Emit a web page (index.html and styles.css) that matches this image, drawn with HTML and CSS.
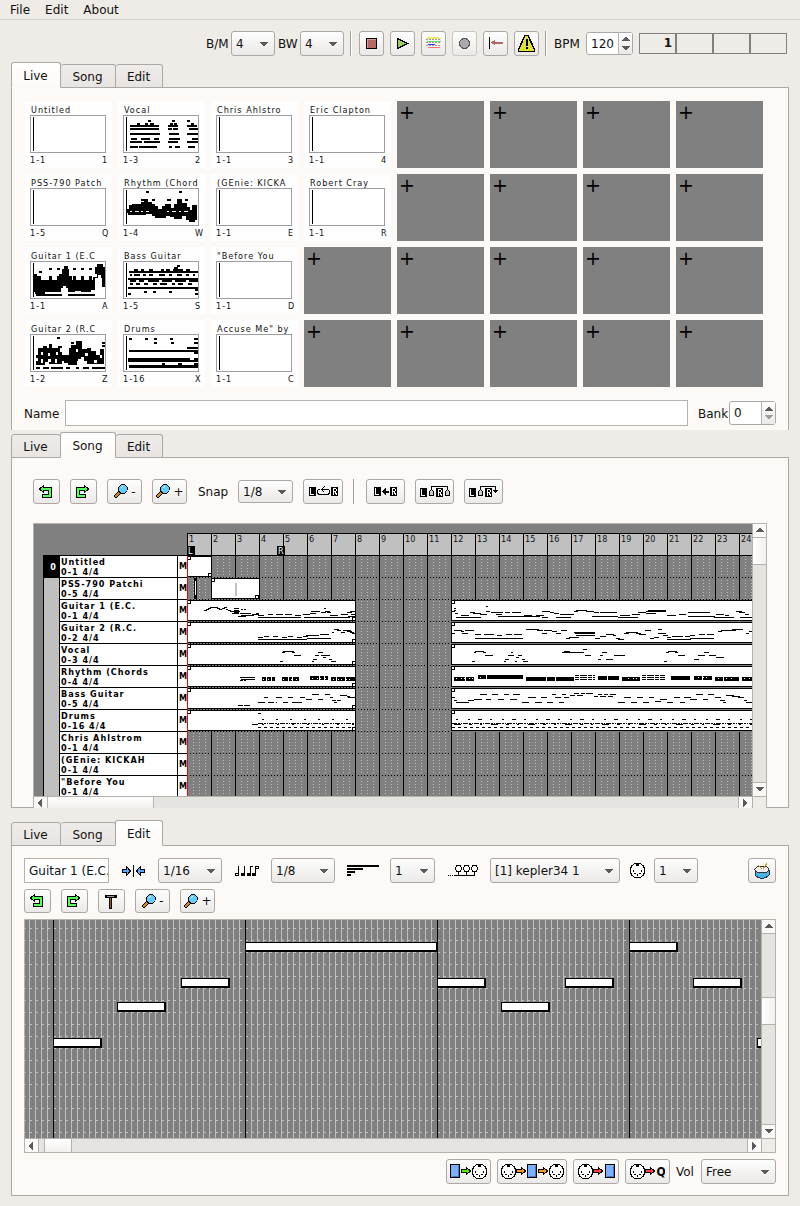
FILE: index.html
```html
<!DOCTYPE html>
<html lang="en">
<head>
<meta charset="utf-8">
<title>Sequencer</title>
<link rel="stylesheet" href="styles.css">
</head>
<body>
<svg class="defs" width="0" height="0">
  <symbol id="undo" viewBox="0 0 14 14"><path d="M4.500 .5v2h8v10h-9v-3h6v-4h-5v2L.5 4z" fill="#5f5" stroke="#000"/></symbol>
  <symbol id="redo" viewBox="0 0 14 14"><path d="M8.500 .5v2h-8v10h9v-3h-6v-4h5v2l4-3.500z" fill="#5f5" stroke="#000"/></symbol>
  <symbol id="lens" viewBox="0 0 16 15"><path d="M1.500 13.500L7 8" stroke="#000" stroke-width="4"/><path d="M2 13l4-4" stroke="#d08a20" stroke-width="2"/><circle cx="10" cy="5" r="4.300" fill="#6cf" stroke="#000"/><path d="M8 4l2-2" stroke="#dff"/></symbol>
  <symbol id="din" viewBox="0 0 15 15"><path d="M5 .5h5l3 2 1.500 3v4l-1.500 3-3 2H5l-3-2-1.500-3v-4L2 2.500z" fill="#fff" stroke="#000"/><path d="M3 7h1v2H3zM11 7h1v2h-1zM4 10h2v1H4zM9 10h2v1H9zM7 11h1v2H7zM6 1h3v2H6z"/></symbol>
  <symbol id="block" viewBox="0 0 10 14"><path d="M.5 .5h9v13h-9z" fill="#7db0ff" stroke="#000"/><path d="M2 12.500h6.500V2" fill="none" stroke="#47c"/></symbol>
  <symbol id="arrow" viewBox="0 0 10 8"><path d="M.5 2.500h5v-2l4 3.500-4 3.500v-2h-5z" stroke="#000"/></symbol>
  <symbol id="markL" viewBox="0 0 7 9"><path d="M0 0h7v9H0z"/><path d="M1.500 1v6.500H5" fill="none" stroke="#fff"/></symbol>
  <symbol id="markR" viewBox="0 0 7 9"><path d="M0 0h7v9H0z"/><path d="M2.500 8V1.500h2l1 1v1l-1 1h-2M4.500 5v1l1 1v1" fill="none" stroke="#fff"/></symbol>
  <symbol id="bell" viewBox="0 0 5 7"><path d="M.5 6.500v-4l2-2 2 2v4z" fill="#ccc" stroke="#000"/></symbol>
  <symbol id="down" viewBox="0 0 8 4"><path d="M0 0h8L4.500 4h-1z" fill="#5a5a5a"/></symbol>
  <symbol id="up" viewBox="0 0 8 4"><path d="M0 4h8L4.500 0h-1z" fill="#5a5a5a"/></symbol>
  <symbol id="left" viewBox="0 0 4 8"><path d="M4 0v8L0 4.500v-1z" fill="#5a5a5a"/></symbol>
  <symbol id="right" viewBox="0 0 4 8"><path d="M0 0v8l4-3.500v-1z" fill="#5a5a5a"/></symbol>
</svg>

<nav class="menu"><span>File</span><span>Edit</span><span>About</span></nav>
<header class="transport">
  <span>B/M</span><div class="select s44">4<svg><use href="#down"/></svg></div>
  <span class="bw">BW</span><div class="select s44">4<svg><use href="#down"/></svg></div>
  <i class="sep"></i>
  <div class="tools">
    <button><svg width="15" height="15"><path d="M2.500 2.500h10v10h-10z" fill="#b56868" stroke="#000"/><path d="M3.500 12V3.500H12" fill="none" stroke="#d99"/></svg></button>
    <button><svg width="15" height="15"><path d="M2.500 2.500v10l10-5z" fill="#9c6" stroke="#000"/></svg></button>
    <button><svg width="15" height="15"><path d="M1 1.500h12M1 2.500h14" stroke="#ece66a"/><path d="M1 5.500h14" stroke="#6d6"/><path d="M2 8.500h7" stroke="#33f"/><path d="M2 11.500h12" stroke="#f77"/><path d="M0 3.500h15M0 6.500h15M0 9.500h15" stroke="#999" stroke-dasharray="2 1"/></svg></button>
    <button class="off"><svg width="15" height="15"><circle cx="7.500" cy="7.500" r="5" fill="#aaa" stroke="#555"/></svg></button>
    <button><svg width="15" height="15"><path d="M1.500 1v12" stroke="#000"/><path d="M5 6.500h10" stroke="#b56868" stroke-width="2"/><path d="M3 6.500l4-3v6z" fill="#b56868"/></svg></button>
    <button><svg width="19" height="19"><path d="M8 1.500h3l6.500 14v2h-16v-2z" fill="#dfe43a" stroke="#000" stroke-width="1.500"/><path d="M9.500 5v7M9.500 13v2" stroke="#000" stroke-width="2"/></svg></button>
  </div>
  <i class="sep"></i>
  <span class="bpm">BPM</span>
  <div class="spin tempo"><b>120</b><div><svg><use href="#up"/></svg><svg><use href="#down"/></svg></div></div>
  <div class="beats"><i>1</i><i></i><i></i><i></i></div>
</header>

<div class="tabs"><span class="on">Live</span><span>Song</span><span>Edit</span></div>
<main class="panel live">
  <div class="pads">
    <div class="pad"><h4>Untitled</h4><svg class="thumb"></svg><p><span>1-1</span><b>1</b></p></div>
    <div class="pad"><h4>Vocal</h4><svg class="thumb"><path class="n" d="M24 5h3M13 8h3M21 8h3M26 8h4M6 10h29M6 13h29M6 18h30M7 23h6M17 23h9M30 23h5M6 26h12M20 26h16M6 31h8M15 31h18M48 5h3M46 8h3M50 8h3M44 10h10M44 13h4M49 13h5M45 18h10M45 23h11M44 26h10M45 31h3M51 31h5M63 5h3M67 8h3M63 10h10M65 13h9M63 18h11M68 23h6M63 26h11M64 31h7"/></svg><p><span>1-3</span><b>2</b></p></div>
    <div class="pad"><h4>Chris Ahlstro</h4><svg class="thumb"></svg><p><span>1-1</span><b>3</b></p></div>
    <div class="pad"><h4>Eric Clapton</h4><svg class="thumb"></svg><p><span>1-1</span><b>4</b></p></div>
    <div class="free">+</div><div class="free">+</div><div class="free">+</div><div class="free">+</div>

    <div class="pad"><h4>PSS-790 Patch</h4><svg class="thumb"></svg><p><span>1-5</span><b>Q</b></p></div>
    <div class="pad"><h4>Rhythm (Chord</h4><svg class="thumb"><path d="M3 20H5V16H8V15H17V13H20V10H24V13H28V15H31V17H34V20H38V17H41V15H47V19H50V15H53V10H58V14H63V18H66V21H68V16H73V31H71V33H65V31H62V27H58V30H50V28H46V27H42V29H31V27H28V25H22V26H4V24H3z"/><path class="n" d="M22 3h3M55 3h3M17 11h3M28 11h3M43 11h4M61 11h3"/><path d="M6 22.500h19M43 22.500h10M55 22.500h9" stroke="#fff" stroke-dasharray="2 3 4 2"/></svg><p><span>1-4</span><b>W</b></p></div>
    <div class="pad"><h4>(GEnie: KICKA</h4><svg class="thumb"></svg><p><span>1-1</span><b>E</b></p></div>
    <div class="pad"><h4>Robert Cray</h4><svg class="thumb"></svg><p><span>1-1</span><b>R</b></p></div>
    <div class="free">+</div><div class="free">+</div><div class="free">+</div><div class="free">+</div>

    <div class="pad"><h4>Guitar 1 (E.C</h4><svg class="thumb"><path d="M3 12H6V14H10V18H28V12H31V7H33V4H37V7H38V14H41V18H62V15H66V12H64V5H66V2H72V5H74V25H71V16H70V13H67V16H64V28H60V30H50V29H44V30H37V26H35V24H32V26H30V30H14V32H4V30H3z"/><path class="n" d="M8 10h3M18 7h3M26 7h3M42 7h3M50 7h3M58 7h3M18 15h3M26 15h3M42 15h3M50 15h3M58 15h3M18 17h3M26 17h3M42 17h3M50 17h3M58 17h3M5 33h26M37 33h27"/></svg><p><span>1-1</span><b>A</b></p></div>
    <div class="pad"><h4>Bass Guitar</h4><svg class="thumb"><path class="n" d="M5 10h69M10 8h4M17 8h3M25 8h4M37 8h3M42 8h4M49 8h10M50 6h4M53 4h3M62 8h4M6 13h2M10 13h6M19 13h3M25 13h4M35 13h6M45 13h3M53 13h5M62 13h3M69 13h2M4 17h70M6 19h6M15 19h5M24 19h11M38 19h10M51 19h11M65 19h9M6 22h3M12 22h4M20 22h4M29 22h4M36 22h7M48 22h3M54 22h5M64 22h4M4 26h70M71 28h3M20 30h3M29 30h3M45 30h3M4 32h3M71 32h3"/></svg><p><span>1-5</span><b>S</b></p></div>
    <div class="pad"><h4>"Before You</h4><svg class="thumb"></svg><p><span>1-1</span><b>D</b></p></div>
    <div class="free">+</div><div class="free">+</div><div class="free">+</div><div class="free">+</div><div class="free">+</div>

    <div class="pad"><h4>Guitar 2 (R.C</h4><svg class="thumb"><path d="M5 20H7V13H12V11H16V13H18V9H21V13H29V17H31V20H38V13H40V10H45V6H51V14H56V13H60V16H65V20H69V14H73V29H56V26H53V22H50V24H47V26H46V30H37V28H33V26H31V29H18V27H14V30H5V26H7V23H5z"/><path class="n" d="M26 3h3M71 8h3M71 11h3M40 8h3M27 12h4M5 33h4M12 33h6M20 33h12M35 33h4M45 33h3M52 33h6M61 33h13"/><path d="M10 17h2v3h-2zM17 18h2v3h-2zM25 17h2v3h-2zM10 24h2v4h-2zM17 24h3v3h-3zM24 24h2v4h-2zM45 14h2v3h-2zM54 18h3v3h-3zM63 25h3v3h-3zM69 20h2v3h-2z" fill="#fff"/></svg><p><span>1-2</span><b>Z</b></p></div>
    <div class="pad"><h4>Drums</h4><svg class="thumb"><path class="n" d="M5 4h3M21 4h3M30 4h3M46 4h3M70 4h4M30 8h3M47 8h3M70 8h4M63 13h11M5 16h69M70 18h4M4 24h62M4 26h70M70 24h4M38 29h3M54 29h4M70 29h4M5 31h69M5 32h69"/></svg><p><span>1-16</span><b>X</b></p></div>
    <div class="pad"><h4>Accuse Me" by</h4><svg class="thumb"></svg><p><span>1-1</span><b>C</b></p></div>
    <div class="free">+</div><div class="free">+</div><div class="free">+</div><div class="free">+</div><div class="free">+</div>
  </div>
  <div class="namebar"><span>Name</span><div class="field"></div><span class="bank">Bank</span><div class="spin bankno"><b>0</b><div><svg><use href="#up"/></svg><svg class="dim"><use href="#down"/></svg></div></div></div>
</main>

<div class="tabs second"><span>Live</span><span class="on">Song</span><span>Edit</span></div>
<main class="panel song">
  <div class="songtools">
    <button class="w27"><svg width="14" height="14"><use href="#undo"/></svg></button>
    <button class="w27"><svg width="14" height="14"><use href="#redo"/></svg></button>
    <button class="w35"><svg width="16" height="15"><use href="#lens"/></svg>-</button>
    <button class="w35"><svg width="16" height="15"><use href="#lens"/></svg>+</button>
    <span>Snap</span><div class="select snap">1/8<svg><use href="#down"/></svg></div>
    <button class="w40"><svg width="29" height="11"><use href="#markL" y="1" width="7" height="9"/><path d="M11 3.500H9.500L8.500 5v2L10 8.500h9L20.500 7V5l-1-1.500H13M15.500 .5l-3 3 3 3" fill="none" stroke="#000"/><use href="#markR" x="22" y="1" width="7" height="9"/></svg></button>
    <i class="sep"></i>
    <button class="w39 after"><svg width="23" height="11"><use href="#markL" y="1" width="7" height="9"/><path d="M10 5.500h5" stroke="#000" stroke-width="2"/><path d="M8 5.500l4-3.500v7z"/><use href="#markR" x="16" y="1" width="7" height="9"/></svg></button>
    <button class="w39"><svg width="30" height="12"><use href="#markL" y="2" width="7" height="9"/><use href="#bell" x="9" y="3" width="5" height="7"/><use href="#markR" x="16" y="2" width="7" height="9"/><use href="#bell" x="25" y="3" width="5" height="7"/><path d="M11.500 4V.5h16V4" fill="none" stroke="#000"/></svg></button>
    <button class="w39"><svg width="30" height="12"><use href="#markL" y="2" width="7" height="9"/><use href="#bell" x="9" y="3" width="5" height="7"/><use href="#markR" x="16" y="2" width="7" height="9"/><path d="M11.500 4V.5h15V6" fill="none" stroke="#000"/><path d="M24 4h5l-2.500 3z"/></svg></button>
  </div>
  <div class="frame songframe">
    <div class="arranger">
      <div class="tracks">
        <div class="set"><b>0</b></div>
        <div class="names">
          <div><p>Untitled<br>0-1 4/4</p><b>M</b></div>
          <div><p>PSS-790 Patchi<br>0-5 4/4</p><b>M</b></div>
          <div><p>Guitar 1 (E.C.<br>0-1 4/4</p><b>M</b></div>
          <div><p>Guitar 2 (R.C.<br>0-2 4/4</p><b>M</b></div>
          <div><p>Vocal<br>0-3 4/4</p><b>M</b></div>
          <div><p>Rhythm (Chords<br>0-4 4/4</p><b>M</b></div>
          <div><p>Bass Guitar<br>0-5 4/4</p><b>M</b></div>
          <div><p>Drums<br>0-16 4/4</p><b>M</b></div>
          <div><p>Chris Ahlstrom<br>0-1 4/4</p><b>M</b></div>
          <div><p>(GEnie: KICKAH<br>0-1 4/4</p><b>M</b></div>
          <div><p>"Before You<br>0-1 4/4</p><b>M</b></div>
        </div>
      </div>
      <svg class="timeline" viewBox="187 533 565 263" width="565" height="263">
        <defs>
          <pattern id="bars" x="187" y="555" width="24" height="3" patternUnits="userSpaceOnUse"><path d="M0 0h24v3H0z" fill="#808080"/><path d="M6 1h1v1H6zM12 1h1v1h-1zM18 1h1v1h-1z" fill="#c0c0c0"/><path d="M0 0h1v3H0z"/></pattern>
          <pattern id="rowline" x="187" y="555" width="3" height="22" patternUnits="userSpaceOnUse"><path d="M0 0h1v1H0z"/></pattern>
          <pattern id="ruler" x="187" y="533" width="24" height="23" patternUnits="userSpaceOnUse"><path d="M0 0h24v23H0z" fill="#c0c0c0"/><path d="M0 0h24v1H1v22H0zM1 22h23v1H1z"/></pattern>
          <g id="clips" fill="#fff" stroke="#000"><path d="M187.500 600.500h168v20h-168zM451.500 600.500h310v20h-310z"/><path d="M187.500 600.500h3v3h-3zM451.500 600.500h3v3h-3zM352.500 617.500h3v3h-3z"/><path d="M188 621.500h168M451 621.500h302" stroke="#808080" stroke-dasharray="2 1"/></g>
        </defs>
        <path d="M187 555h566v242H187z" fill="url(#bars)"/><path d="M187 555h566v242H187z" fill="url(#rowline)"/>
        <path d="M187 533h566v23H187z" fill="url(#ruler)"/>
        <g class="num"><text x="189" y="542">1</text><text x="213" y="542">2</text><text x="237" y="542">3</text><text x="261" y="542">4</text><text x="285" y="542">5</text><text x="309" y="542">6</text><text x="333" y="542">7</text><text x="357" y="542">8</text><text x="381" y="542">9</text><text x="405" y="542">10</text><text x="429" y="542">11</text><text x="453" y="542">12</text><text x="477" y="542">13</text><text x="501" y="542">14</text><text x="525" y="542">15</text><text x="549" y="542">16</text><text x="573" y="542">17</text><text x="597" y="542">18</text><text x="621" y="542">19</text><text x="645" y="542">20</text><text x="669" y="542">21</text><text x="693" y="542">22</text><text x="717" y="542">23</text><text x="741" y="542">24</text></g>
        <path d="M188 546h7v9h-7zM277 546h8v9h-8z"/>
        <g class="num mark"><text x="188" y="554">L</text><text x="278" y="554">R</text></g>
        <path d="M187.500 556.500h24v20h-24zM211.500 578.500h48v20h-48z" fill="#fff" stroke="#000"/>
        <path d="M187.500 556.500h3v3h-3zM208.500 573.500h3v3h-3zM211.500 578.500h3v3h-3zM255.500 595.500h3v3h-3zM194.500 578.500h2v20h-2z" fill="#fff" stroke="#000"/>
        <path d="M194 578h3v3h-3zM194 595h3v3h-3z"/><path d="M236 582.500v13" stroke="#c0c0c0" stroke-width="2"/>
        <use href="#clips"/><use href="#clips" y="22"/><use href="#clips" y="44"/><use href="#clips" y="66"/><use href="#clips" y="88"/><use href="#clips" y="110"/>
        <g fill="none" stroke="#000">
          <path d="M204 610.500h3M206 609.500h3M208 608.500h3M210 607.500h8M217 608.500h3M219 609.500h3M222 608.500h3M224 607.500h3M226 609.500h2M228 610.500h3M230 611.500h10M234 608.500h5M234 610.500h5M234 612.500h5M241 609.500h2M244 609.500h2M232 613.500h7M240 613.500h11M238 616.500h8M241 615.500h13M252 614.500h7M256 613.500h3M258 615.500h6M268 614.500h5M276 614.500h7M285 614.500h7M295 615.500h6M303 614.500h7M310 613.500h6M311 611.500h9M324 608.500h2M321 612.500h5M325 611.500h5M327 612.500h4M330 615.500h8M341 614.500h7M347 612.500h5M350 611.500h6M351 614.500h5M258 617.500h43M304 617.500h26M330 617.500h20M348 616.500h8"/>
          <path d="M258 637.500h5M264 636.500h5M273 636.500h5M282 637.500h5M288 636.500h5M297 637.500h5M303 636.500h5M306 635.500h13M320 634.500h9M258 639.500h49M307 638.500h24M332 632.500h2M334 629.500h5M337 630.500h4M341 632.500h4M343 630.500h8M347 631.500h5M350 632.500h4M352 633.500h4"/>
          <path d="M280 661.500h3M282 652.500h3M283 651.500h11M292 652.500h3M294 655.500h7M312 661.500h2M313 659.500h4M315 655.500h4M318 652.500h5M321 655.500h4M323 657.500h3M325 655.500h5M329 659.500h3M331 661.500h5"/>
          <path d="M240 677.500h15M241 679.500h14M240 680.500h3M244 680.500h2"/><path d="M262 679h4M267 679h4M272 679h3M282 679h6M289 679h3M293 679h6M310 678h9M320 678h4M325 678h3M331 679h5M337 679h8M346 679h10M454 679h11M466 679h8M478 677h8M487 677h36M526 679h20M547 679h8M556 679h18M598 678h9M608 678h11M622 679h18M671 678h19M694 678h8M703 678h9M715 679h8M724 679h15M742 679h11" stroke-width="4"/><path d="M263 679.500h11M283 679.500h16M312 678.500h14M333 679.500h20M456 678.500h17M480 677.500h4M628 678.500h10M698 677.500h10M718 678.500h14M744 678.500h8" stroke="#fff" stroke-dasharray="1 4 1 2"/><path d="M575 675.500h20M575 677.500h20M575 679.500h20M642 675.500h23M642 677.500h23M642 679.500h23" stroke-dasharray="4 1 7 1"/>
          <path d="M238 705.500h5M244 705.500h6M258 702.500h7M268 702.500h6M276 702.500h1M283 702.500h5M292 702.500h10M264 697.500h4M276 697.500h6M288 697.500h5M300 697.500h5M306 699.500h6M312 694.500h7M318 699.500h5M325 694.500h5M330 697.500h3M332 700.500h4M334 702.500h3M337 700.500h4M340 695.500h7M347 696.500h3M348 697.500h8"/>
          <path d="M258 713.500h3"/><path d="M262 719.500h93" stroke-dasharray="2 12 2 12"/><path d="M252 724.500h6"/><path d="M258 723.500h97" stroke-dasharray="5 1 2 1 1 1"/><path d="M258 727.500h97" stroke-dasharray="3 3"/><path d="M262 724.500h93" stroke-dasharray="2 13"/>
          <path d="M452 611.500h3M454 608.500h2M454 610.500h2M455 613.500h3M456 617.500h25M461 615.500h8M470 612.500h5M473 613.500h8M480 614.500h7M486 606.500h2M486 611.500h4M491 612.500h12M505 612.500h5M512 612.500h9M496 614.500h6M498 616.500h24M522 616.500h18M524 615.500h8M536 615.500h8M542 611.500h8M550 612.500h4M542 617.500h6M554 613.500h5M560 614.500h14M556 617.500h15M574 611.500h4M576 610.500h11M586 611.500h8M594 612.500h5M600 612.500h17M592 616.500h26M618 617.500h20M620 615.500h10M632 614.500h8M638 612.500h8M646 611.500h20M648 610.500h18M646 613.500h10M667 615.500h9M679 614.500h7M688 612.500h10M696 612.500h14M688 616.500h27M714 617.500h20M716 614.500h8M725 615.500h4M736 611.500h6M739 612.500h6M745 614.500h4M740 617.500h13"/>
          <path d="M452 633.500h3M454 630.500h8M461 631.500h3M462 633.500h6M465 630.500h9M475 634.500h6M484 634.500h10M497 635.500h5M506 634.500h6M514 634.500h8M475 638.500h48M526 629.500h13M537 630.500h6M542 633.500h5M544 630.500h8M552 631.500h5M556 633.500h5M561 630.500h6M566 638.500h4M569 637.500h10M574 632.500h21M575 633.500h20M576 635.500h19M595 638.500h5M600 636.500h6M606 634.500h8M613 635.500h3M616 638.500h4M618 639.500h6M624 633.500h5M626 632.500h12M636 633.500h5M639 634.500h7M645 630.500h6M650 638.500h4M654 637.500h5M658 629.500h4M658 633.500h5M663 633.500h3M663 635.500h5M667 637.500h4M667 639.500h24M672 636.500h11M685 636.500h5M690 635.500h5M699 634.500h6M707 634.500h7M690 638.500h24M718 631.500h4M721 630.500h15M732 629.500h11M746 633.500h3M749 631.500h4"/>
          <path d="M472 661.500h3M474 652.500h2M475 651.500h9M483 652.500h3M485 655.500h8M504 661.500h2M505 659.500h4M508 655.500h6M511 652.500h2M516 657.500h3M518 655.500h4M515 661.500h2M522 659.500h3M523 661.500h5M562 652.500h9M564 651.500h6M571 652.500h13M583 649.500h4M585 655.500h6M598 659.500h3M600 655.500h3M602 652.500h5M606 659.500h7M614 655.500h11M664 661.500h3M666 652.500h3M668 651.500h9M675 652.500h3M678 655.500h7M694 659.500h5M698 655.500h7M704 652.500h5M709 655.500h7M716 657.500h8"/>
          <path d="M452 697.500h3M454 700.500h3M456 702.500h13M468 700.500h6M474 699.500h8M486 699.500h5M480 694.500h7M492 694.500h6M498 699.500h6M504 694.500h5M513 694.500h7M510 699.500h7M522 702.500h7M528 697.500h8M535 702.500h7M541 697.500h6M547 702.500h6M552 694.500h4M555 697.500h6M559 702.500h5M562 694.500h4M564 697.500h5M570 695.500h5M574 693.500h5M577 695.500h6M581 693.500h4M586 693.500h7M594 696.500h4M598 694.500h4M600 696.500h6M604 694.500h4M608 696.500h5M610 694.500h6M618 702.500h7M624 697.500h7M631 702.500h6M637 697.500h6M643 702.500h6M649 697.500h5M655 701.500h6M660 699.500h7M667 702.500h6M674 697.500h6M680 702.500h5M684 697.500h7M690 699.500h7M696 694.500h7M703 699.500h5M708 694.500h6M715 697.500h6M720 700.500h5M723 702.500h3M726 695.500h8M732 696.500h8M738 697.500h6M744 700.500h3M746 702.500h7"/>
          <path d="M456 719.500h297" stroke-dasharray="2 10 2 8 4 8"/><path d="M452 723.500h301" stroke-dasharray="5 1 2 1 1 1"/><path d="M454 724.500h299" stroke-dasharray="7 8 3 8 2 9"/><path d="M452 727.500h301" stroke-dasharray="3 3"/>
        </g>
        <path d="M187.500 556v240" stroke="#f00"/>
      </svg>
    </div>
    <div class="vscroll"><i><svg><use href="#up"/></svg></i><b class="t1"></b><i class="end"><svg><use href="#down"/></svg></i></div>
    <div class="hscroll"><i><svg><use href="#left"/></svg></i><b></b><i class="end"><svg><use href="#right"/></svg></i></div>
    <div class="corner"></div>
  </div>
</main>

<div class="tabs third"><span>Live</span><span>Song</span><span class="on">Edit</span></div>
<main class="panel edit">
  <div class="edittools">
    <div class="field title">Guitar 1 (E.C.</div>
    <svg class="i1" width="23" height="12"><path d="M.5 4.500h4v-3l4 4.500-4 4.500v-3h-4zM22.500 4.500h-4v-3l-4 4.500 4 4.500v-3h4z" fill="#5af" stroke="#000"/><path d="M11.500 0v12" stroke="#000"/></svg>
    <div class="select s64">1/16<svg><use href="#down"/></svg></div>
    <svg class="i2" width="24" height="12"><path d="M3.500 1v9M9.500 1v9M15.500 10V1.500h2M20.500 10V1.500h3v2h-3" fill="none" stroke="#000"/><path d="M.5 8.500h3v2h-3z" fill="none" stroke="#000"/><path d="M6 8h4v3H6zM12 8h4v3h-4zM17 8h4v3h-4z"/></svg>
    <div class="select s64">1/8<svg><use href="#down"/></svg></div>
    <svg class="i3" width="32" height="12"><path d="M0 0h32v2H0zM0 3h16v2H0zM0 6h8v2H0zM0 9h4v2H0z"/></svg>
    <div class="select s45">1<svg><use href="#down"/></svg></div>
    <svg class="i4" width="30" height="12"><path d="M0 10.500h6" stroke="#000" stroke-dasharray="1 1"/><path d="M6 10.500h21M10.500 7v4M18.500 7v4M26.500 7v4" stroke="#000"/><g fill="#fff" stroke="#000"><path d="M9 .5h3l1.500 2v2L12 6.500H9L7.500 4.500v-2zM17 .5h3l1.500 2v2L20 6.500h-3l-1.500-2v-2zM25 .5h3l1.500 2v2L28 6.500h-3l-1.500-2v-2z"/></g></svg>
    <div class="select s130">[1] kepler34 1<svg><use href="#down"/></svg></div>
    <svg class="i5" width="15" height="15"><use href="#din"/></svg>
    <div class="select s44">1<svg><use href="#down"/></svg></div>
    <button class="drum"><svg width="16" height="16"><path d="M1 7v5l3 2.500 4 1 4-1 3-2.500V7z" fill="#48b4e8" stroke="#234"/><ellipse cx="8" cy="6.500" rx="7" ry="3.500" fill="#eee" stroke="#333"/><path d="M4 2l4 4M13 0L9 6" stroke="#d69a22"/></svg></button>
  </div>
  <div class="edittools two">
    <button class="w27"><svg width="14" height="14"><use href="#undo"/></svg></button>
    <button class="w27"><svg width="14" height="14"><use href="#redo"/></svg></button>
    <button class="w27"><svg width="14" height="15"><path d="M1 1h10v3H1zM10 1h2l1 1v2h-2z"/><path d="M3 2.500h7" stroke="#999"/><path d="M5.500 3.500h2v11h-2z" fill="#a65a00" stroke="#000"/></svg></button>
    <button class="w35"><svg width="16" height="15"><use href="#lens"/></svg>-</button>
    <button class="w35"><svg width="16" height="15"><use href="#lens"/></svg>+</button>
  </div>
  <div class="frame rollframe">
    <svg class="roll" viewBox="25 920 736 218" width="736" height="218">
      <defs><pattern id="grid" x="53" y="928" width="6" height="12" patternUnits="userSpaceOnUse"><path d="M0 0h6v12H0z" fill="#808080"/><path d="M0 0h1v12H0zM1 0h2v1H1z" fill="#c0c0c0"/></pattern></defs>
      <path d="M25 920h736v218H25z" fill="url(#grid)"/>
      <path d="M53.500 920v218M245.500 920v218M437.500 920v218M629.500 920v218" stroke="#000"/>
      <path d="M53 1038h49v10H53zM117 1002h49v10h-49zM181 978h49v10h-49zM245 942h192v10H245zM437 978h49v10h-49zM501 1002h49v10h-49zM565 978h49v10h-49zM629 942h49v10h-49zM693 978h49v10h-49zM757 1038h49v10h-49z"/>
      <path d="M54 1039h46v7H54zM118 1003h46v7h-46zM182 979h46v7h-46zM246 943h190v7H246zM438 979h46v7h-46zM502 1003h46v7h-46zM566 979h46v7h-46zM630 943h46v7h-46zM694 979h46v7h-46zM758 1039h46v7h-46z" fill="#fff"/>
    </svg>
    <div class="vscroll"><i><svg><use href="#up"/></svg></i><b class="t2"></b><i class="end"><svg><use href="#down"/></svg></i></div>
    <div class="hscroll"><i><svg><use href="#left"/></svg></i><b></b><i class="end"><svg><use href="#right"/></svg></i></div>
    <div class="corner"></div>
  </div>
  <div class="routing">
    <button class="w45"><svg width="37" height="15"><use href="#block" width="10" height="14"/><use href="#arrow" x="11" y="3" width="10" height="8" fill="#4e0"/><use href="#din" x="22" width="15" height="15"/></svg></button>
    <button class="w70"><svg width="63" height="15"><use href="#din" width="15" height="15"/><use href="#arrow" x="15" y="3" width="10" height="8" fill="#f92"/><use href="#block" x="26" width="10" height="14"/><use href="#arrow" x="37" y="3" width="10" height="8" fill="#f92"/><use href="#din" x="48" width="15" height="15"/></svg></button>
    <button class="w46"><svg width="37" height="15"><use href="#din" width="15" height="15"/><use href="#arrow" x="15" y="3" width="10" height="8" fill="#f44"/><use href="#block" x="27" width="10" height="14"/></svg></button>
    <button class="w45"><svg width="35" height="15"><use href="#din" width="15" height="15"/><use href="#arrow" x="15" y="3" width="10" height="8" fill="#f44"/><text class="q" x="26.500" y="12">Q</text></svg></button>
    <span>Vol</span><div class="select s75">Free<svg><use href="#down"/></svg></div>
  </div>
</main>
</body>
</html>
```
FILE: styles.css
```css
* { box-sizing: border-box; }
body {
  margin: 0;
  width: 800px;
  height: 1206px;
  overflow: hidden;
  background: #efebe7;
  color: #111;
  font: 12px/16px "DejaVu Sans", sans-serif;
}
h4, p { margin: 0; }
i { font-style: normal; }
svg { display: block; flex: none; shape-rendering: crispEdges; }
.defs { position: absolute; }

.menu { display: flex; gap: 15px; height: 20px; padding: 2px 10px 0; border-bottom: 1px solid #d5d1cc; }

.transport { display: flex; align-items: center; height: 42px; padding: 5px 13px 0 206px; }
.transport > span { width: 25px; white-space: nowrap; }
.transport > .bw { width: 22px; margin-left: 3px; }
.transport > .bw + .s44 { margin-right: 6px; }
.transport .bpm { width: 32px; margin-left: 7px; }
.tools { display: flex; gap: 6px; margin: 0 6px 0 7px; }
.sep { width: 2px; height: 25px; border-left: 1px solid #a29e9a; border-right: 1px solid #fff; }

button {
  display: flex; align-items: center; justify-content: center; gap: 2px;
  flex: none; width: 25px; height: 25px; padding: 0;
  border: 1px solid #aca8a5; border-radius: 3px;
  background: linear-gradient(#fefefe, #ebe9e7);
  font: inherit; color: inherit;
}
button.off { border-color: #cbc7c3; }
.w27 { width: 27px; } .w35 { width: 35px; } .w39 { width: 39px; } .w40 { width: 40px; }
.w45 { width: 45px; } .w46 { width: 46px; } .w70 { width: 70px; }
.w27 svg { margin-right: 1px; }

.select {
  display: flex; align-items: center; justify-content: space-between; flex: none;
  height: 25px; padding: 0 6px 0 4px;
  border: 1px solid #aca8a5; border-radius: 3px;
  background: linear-gradient(#fefefe, #ebe9e7);
}
.select svg, .spin svg { width: 8px; height: 4px; }
.s44 { width: 44px; } .s45 { width: 45px; } .s64 { width: 64px; } .s75 { width: 75px; } .s130 { width: 130px; }

.spin { display: flex; flex: none; border: 1px solid #aca8a5; border-radius: 3px; background: #fff; }
.spin b { flex: 1; padding-left: 4px; font-weight: normal; line-height: 22px; }
.spin div { display: flex; flex-direction: column; align-items: center; justify-content: space-evenly; width: 14px; border-left: 1px solid #b8b4b0; background: linear-gradient(#fefefe, #ebe9e7); }
.tempo { width: 47px; height: 23px; }
.bankno { width: 47px; height: 24px; }
.dim { opacity: .55; }
.beats { display: flex; flex: none; margin-left: 6px; width: 148px; height: 21px; border: 1px solid #808080; }
.beats i { flex: 1; padding-right: 3px; text-align: right; font-weight: bold; line-height: 19px; }
.beats i + i { border-left: 2px solid #808080; }

.tabs { display: flex; align-items: flex-end; height: 26px; margin: 0 11px -1px; position: relative; }
.tabs span { width: 55px; height: 24px; padding: 4px 1px 0 0; text-align: center; border: 1px solid #aca8a5; border-left-width: 0; border-radius: 3px 3px 0 0; background: linear-gradient(#efebe8, #e8e4e1); }
.tabs span:first-child { width: 50px; border-left-width: 1px; }
.tabs span:last-child { width: 47px; }
.tabs .on { height: 26px; padding-top: 5px; background: linear-gradient(#fff, #fdf9f6); border-bottom-color: #fdf9f6; border-left-width: 1px; }
.tabs span.on:nth-child(n+2) { margin-left: -1px; width: 56px; }
.tabs span.on:last-child { width: 48px; }
.panel { margin: 0 11px; border: 1px solid #aca8a5; background: #fdf9f6; }

.live { height: 343px; border-bottom: 0; padding: 13px 12px 0 13px; }
.pads { display: grid; grid-template-columns: repeat(8, 87px); gap: 6px; grid-auto-rows: 67px; }
.pad { padding: 4px 0 0 5px; background: #fefefe; font: 9px/10px "DejaVu Sans Condensed", "DejaVu Sans", sans-serif; font-stretch: condensed; letter-spacing: 1px; white-space: nowrap; }
.pad h4 { font-size: 9px; font-weight: normal; padding-left: 1px; }
.pad p { display: flex; justify-content: space-between; padding-top: 2px; }
.pad b { width: 10px; font-weight: normal; }
.thumb { width: 76px; height: 38px; border: 1px solid #9d9da3; background: linear-gradient(#000, #000) 2px 1px / 1px 34px no-repeat #fff; }
.thumb .n { stroke: #000; stroke-width: 2; fill: none; }
.free { padding: 3px 0 0 2px; background: #808080; color: #000; font-size: 19px; line-height: 16px; }
.namebar { display: flex; align-items: center; margin-top: 13px; margin-left: -1px; }
.namebar > span { width: 41px; padding-top: 1px; }
.namebar > .bank { width: 31px; margin-left: 10px; }
.field { width: 623px; height: 26px; border: 1px solid #b5b1ad; background: #fff; }

.second { margin-top: 2px; }
.song { height: 351px; padding: 21px 21px 0; }
.songtools { display: flex; align-items: center; height: 25px; gap: 10px; white-space: nowrap; }
.songtools > span { width: 31px; margin-left: 1px; margin-right: -1px; }
.snap { width: 55px; height: 23px; }
.songtools > .after { margin-left: 1px; }

.frame { display: grid; border: 1px solid #b5b1ad; }
.songframe { width: 734px; height: 285px; margin-top: 19px; grid-template: 272px 12px / 718px 14px; }
.arranger { display: flex; padding-top: 9px; background: #808080; overflow: hidden; }
.tracks { display: flex; width: 153px; padding: 22px 0 0 9px; height: 263px; overflow: hidden; font: bold 9px/10px "DejaVu Sans Condensed", "DejaVu Sans", sans-serif; font-stretch: condensed; color: #000; }
.set { width: 17px; height: 260px; background: #c0c0c0; border-left: 1px solid #000; border-right: 1px solid #000; }
.set b { display: block; height: 23px; padding: 7px 3px 0 0; background: #000; color: #fff; text-align: right; }
.names { width: 127px; height: 260px; background: #fff; }
.names div { display: flex; height: 22px; border-top: 1px solid #000; white-space: nowrap; }
.names p { width: 118px; padding: 1px 0 0 1px; letter-spacing: 1px; border-right: 1px solid #000; }
.names b { padding: 5px 0 0 1px; }
.num { font: 9px "DejaVu Sans Condensed", "DejaVu Sans", sans-serif; font-stretch: condensed; fill: #111; }
.mark { fill: #fff; }

.vscroll, .hscroll { display: flex; background: #e5e4e1; }
.vscroll { flex-direction: column; border-left: 1px solid #b5b1ad; }
.hscroll { border-top: 1px solid #b5b1ad; overflow: hidden; }
.vscroll i, .hscroll i { display: flex; align-items: center; justify-content: center; flex: none; background: #faf9f8; }
.vscroll i { height: 14px; padding-bottom: 1px; border-bottom: 1px solid #b5b1ad; }
.hscroll i { width: 14px; padding-right: 2px; border-right: 1px solid #b5b1ad; }
.vscroll i svg { width: 8px; height: 4px; }
.hscroll i svg { width: 4px; height: 8px; }
.vscroll .end { margin-top: auto; padding-bottom: 2px; border-bottom: 0; border-top: 1px solid #b5b1ad; }
.hscroll .end { margin-left: auto; border-right: 0; border-left: 1px solid #b5b1ad; }
.vscroll b { height: 27px; border-bottom: 1px solid #b5b1ad; background: linear-gradient(90deg, #fff, #f2f0ee); }
.hscroll b { width: 106px; border-right: 1px solid #b5b1ad; background: linear-gradient(#fff, #f2f0ee); }
.corner { border: solid #b5b1ad; border-width: 1px 0 0 1px; background: #efebe7; }

.third { margin-top: 12px; }
.edit { height: 351px; padding: 12px 12px 0; }
.edittools { display: flex; align-items: center; height: 25px; }
.edittools .title { width: 85px; height: 25px; padding: 4px 0 0 4px; overflow: hidden; white-space: nowrap; }
.i1 { margin: 0 13px; } .i2 { margin: 0 12px 0 13px; } .i3 { margin: 0 11px 0 12px; }
.i4 { margin: 0 12px 0 13px; } .i5 { margin: 0 9px 0 10px; }
.drum { width: 28px; margin-left: auto; }
.two { margin-top: 6px; gap: 10px; height: 24px; }
.two button { height: 24px; }
.rollframe { width: 752px; height: 234px; margin-top: 6px; grid-template: 218px 14px / 736px 14px; }
.rollframe .t2 { margin-top: 63px; height: 28px; border-top: 1px solid #b5b1ad; }
.rollframe .hscroll b { width: 28px; margin-left: 5px; border-left: 1px solid #b5b1ad; }
.routing { display: flex; align-items: center; justify-content: flex-end; gap: 6px; margin-top: 6px; }
.routing span { width: 19px; }
.q { font: 12px "DejaVu Sans Condensed", sans-serif; font-weight: bold; font-stretch: condensed; }
```
